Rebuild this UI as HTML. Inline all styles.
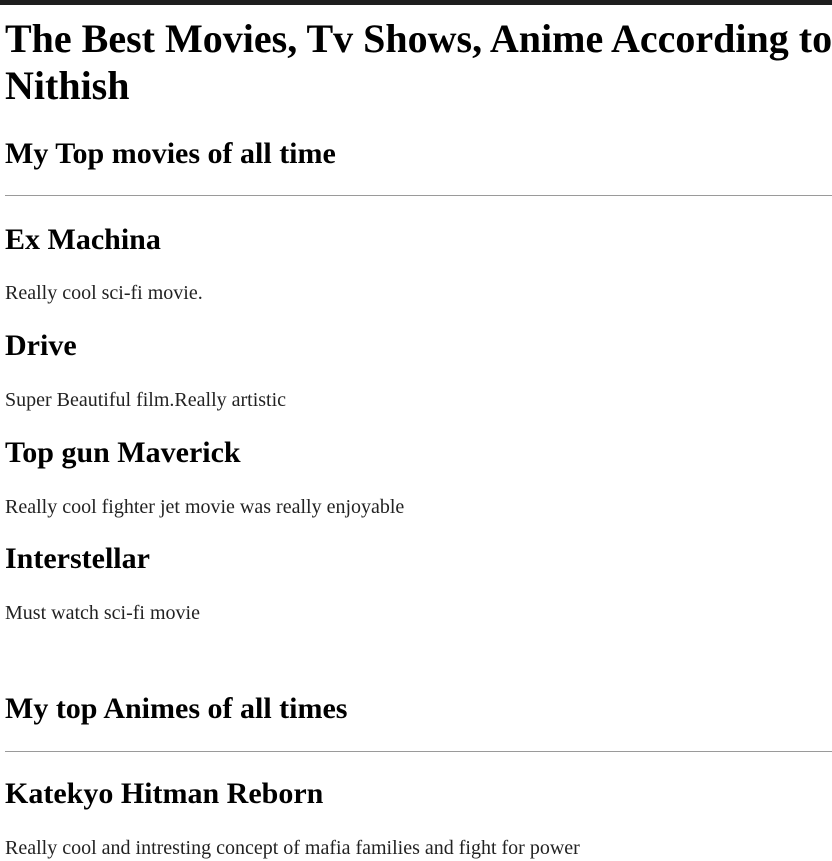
<!DOCTYPE html>
<html><head><meta charset="utf-8"><style>
html,body{margin:0;padding:0;background:#fff;width:832px;height:861px;overflow:hidden;position:relative}
body{font-family:"Liberation Serif",serif;color:#000}
.bar{position:absolute;left:0;top:0;width:832px;height:5px;background:#1e1e1e}
.t{position:absolute;left:5px;line-height:1;white-space:nowrap;margin:0}
.h1{font-size:40px;font-weight:bold;line-height:47px}
.h2{font-size:30px;font-weight:bold}
.h3{font-size:30px;font-weight:bold}
.p{font-size:20px;color:#222}
.hr{position:absolute;left:5px;width:827px;height:1px;background:#9a9a9a}
</style></head><body>
<div class="bar"></div>
<div class="t h1" style="top:15px">The Best Movies, Tv Shows, Anime According to<br>Nithish</div>
<div class="t h2" style="top:139px">My Top movies of all time</div>
<div class="hr" style="top:195px"></div>
<div class="t h3" style="top:225px">Ex Machina</div>
<div class="t p" style="top:283px">Really cool sci-fi movie.</div>
<div class="t h3" style="top:331px">Drive</div>
<div class="t p" style="top:390px">Super Beautiful film.Really artistic</div>
<div class="t h3" style="top:438px">Top gun Maverick</div>
<div class="t p" style="top:497px">Really cool fighter jet movie was really enjoyable</div>
<div class="t h3" style="top:544px">Interstellar</div>
<div class="t p" style="top:603px">Must watch sci-fi movie</div>
<div class="t h2" style="top:694px">My top Animes of all times</div>
<div class="hr" style="top:751px"></div>
<div class="t h3" style="top:779px">Katekyo Hitman Reborn</div>
<div class="t p" style="top:838px">Really cool and intresting concept of mafia families and fight for power</div>
</body></html>
